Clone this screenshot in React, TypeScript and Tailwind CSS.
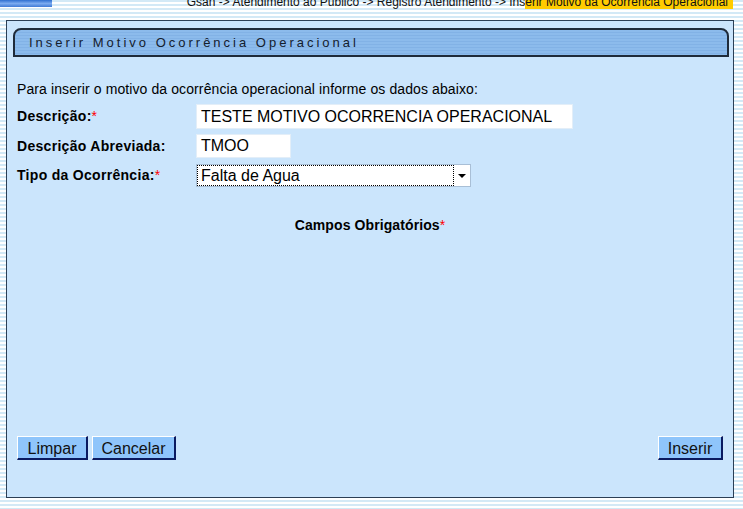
import React from "react";

export default function App() {
  const font = { fontFamily: '"Liberation Sans", Arial, sans-serif' };
  return (
    <div
      className="w-[743px] h-[509px] overflow-hidden bg-[repeating-linear-gradient(to_bottom,#d3e9f6_0px,#d3e9f6_2px,#ffffff_2px,#ffffff_4px)] text-black"
      style={font}
    >
      {/* top strip */}
      <div className="h-[20px] flex items-start justify-between">
        <div className="w-[52px] h-[7px] bg-[linear-gradient(to_bottom,#2f6fd0,#7aaaf0_50%,#3f7ad6)]" />
        <div className="mt-[-3px] mr-[10px] text-[12px] leading-[11px] whitespace-nowrap text-[#111]">
          Gsan -&gt; Atendimento ao Público -&gt; Registro Atendimento -&gt; Ins
          <span className="bg-[#ffcc00] pr-[5px]">erir Motivo da Ocorrencia Operacional</span>
        </div>
      </div>

      {/* main panel */}
      <div className="ml-[6px] w-[728px] h-[478px] border border-[#2c3f55] bg-[#cbe5fc] flex flex-col">
        <div className="mt-[7px] ml-[6px] mr-[4px] h-[29px] rounded-tl-[8px] rounded-tr-[8px] border-2 border-[#1f2b3a] bg-[repeating-linear-gradient(to_bottom,#8cbbec_0px,#8cbbec_2px,#82b2e6_2px,#82b2e6_3px)] flex items-center pl-[14px]">
          <span className="text-[13px] tracking-[3px] text-[#14202e]">
            Inserir Motivo Ocorrência Operacional
          </span>
        </div>

        <div className="pl-[10px] pr-[10px] flex flex-col flex-1">
          <div className="mt-[24px] text-[14px] leading-[16px] tracking-[0.1px]">
            Para inserir o motivo da ocorrência operacional informe os dados abaixo:
          </div>

          <div className="mt-[7px] flex items-center h-[25px]">
            <div className="w-[179px] text-[14px] font-bold tracking-[0.3px]">
              Descrição:<span className="text-[#ff0000] font-normal">*</span>
            </div>
            <div className="w-[377px] h-[25px] bg-white border border-[#e3eef8] text-[16px] leading-[23px] pl-[4px]">
              TESTE MOTIVO OCORRENCIA OPERACIONAL
            </div>
          </div>

          <div className="mt-[5px] flex items-center h-[24px]">
            <div className="w-[179px] text-[14px] font-bold tracking-[0.3px]">Descrição Abreviada:</div>
            <div className="w-[95px] h-[24px] bg-white border border-[#e3eef8] text-[16px] leading-[22px] pl-[4px]">
              TMOO
            </div>
          </div>

          <div className="mt-[6px] flex items-center h-[23px]">
            <div className="w-[179px] text-[14px] font-bold tracking-[0.3px]">
              Tipo da Ocorrência:<span className="text-[#ff0000] font-normal">*</span>
            </div>
            <div className="w-[275px] h-[23px] bg-white border border-[#a9bfd6] flex items-stretch">
              <div className="flex-1 border border-dotted border-black text-[16px] leading-[19px] pl-[3px]">
                Falta de Agua
              </div>
              <div className="w-[16px] flex items-center justify-center">
                <svg width="8" height="4" viewBox="0 0 8 4">
                  <polygon points="0,0 8,0 4,4" fill="#000" />
                </svg>
              </div>
            </div>
          </div>

          <div className="mt-[28px] text-center text-[14px] font-bold tracking-[0.1px]">
            Campos Obrigatórios<span className="text-[#ff0000] font-normal">*</span>
          </div>

          <div className="flex-1" />

          <div className="mb-[37px] flex items-center justify-between">
            <div className="flex gap-[4px]">
              <button className="w-[71px] h-[24px] bg-[#8fc5fb] border-t border-l border-t-white border-l-white border-b-2 border-r-2 border-b-[#0a1a60] border-r-[#0a1a60] text-[16px] text-[#111]">
                Limpar
              </button>
              <button className="w-[84px] h-[24px] bg-[#8fc5fb] border-t border-l border-t-white border-l-white border-b-2 border-r-2 border-b-[#0a1a60] border-r-[#0a1a60] text-[16px] text-[#111]">
                Cancelar
              </button>
            </div>
            <button className="w-[65px] h-[24px] bg-[#8fc5fb] border-t border-l border-t-white border-l-white border-b-2 border-r-2 border-b-[#0a1a60] border-r-[#0a1a60] text-[16px] text-[#111]">
              Inserir
            </button>
          </div>
        </div>
      </div>
    </div>
  );
}
